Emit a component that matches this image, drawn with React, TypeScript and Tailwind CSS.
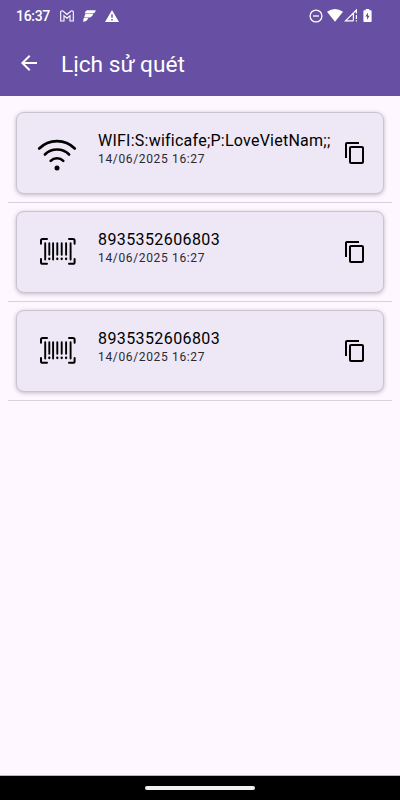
import React from "react";
import { MdArrowBack, MdContentCopy } from "react-icons/md";

type Scan = { kind: "wifi" | "barcode"; value: string; time: string };

const scans: Scan[] = [
  { kind: "wifi", value: "WIFI:S:wificafe;P:LoveVietNam;;", time: "14/06/2025 16:27" },
  { kind: "barcode", value: "8935352606803", time: "14/06/2025 16:27" },
  { kind: "barcode", value: "8935352606803", time: "14/06/2025 16:27" },
];

function WifiIcon() {
  return (
    <svg width="42" height="42" viewBox="0 0 42 42" fill="none" stroke="#000" strokeWidth="2.6" strokeLinecap="round">
      <path d="M3.2 16.5C13 6.6 29 6.6 38.8 16.5" />
      <path d="M8.9 22.5C15.5 15.9 26.5 15.9 33.1 22.5" />
      <path d="M14.7 28.8C18 25.4 24 25.4 27.3 28.8" />
      <circle cx="21" cy="36.1" r="2.5" fill="#000" stroke="none" />
    </svg>
  );
}

function BarcodeIcon() {
  return (
    <svg width="42" height="42" viewBox="0 0 42 42" fill="none" stroke="#000" strokeWidth="2" strokeLinecap="round" strokeLinejoin="round">
      <path d="M5 12.8V9.6Q5 8 6.6 8H11M33 8H37Q38.6 8 38.6 9.6V12.8M38.6 28V31.2Q38.6 32.8 37 32.8H33M11 32.8H6.6Q5 32.8 5 31.2V28" />
      <path strokeWidth="1.9" d="M9.2 12.2V28.6M17.1 12.2V28.6M34.6 12.2V28.6M13.3 12.2V23.8M21.3 12.2V23.8M25.7 12.2V23.8M30.1 12.2V23.8" />
      <path strokeWidth="2.3" d="M13.3 27.6v.5M21.3 27.6v.5M25.7 27.6v.5M30.1 27.6v.5" />
    </svg>
  );
}

function StatusBar() {
  return (
    <div className="flex h-[31px] items-center pl-4 pr-7">
      <span className="w-[44px] text-[14px] font-medium leading-4 tracking-[-0.3px]">16:37</span>
      <svg width="14" height="12" viewBox="0 0 14 12" fill="none" stroke="currentColor" strokeWidth="1.1">
        <path d="M.7 1.6Q1.6.3 2.9 1L7 4.5 11.1 1Q12.4.3 13.3 1.6V11H10V5.6L7 8.2 4 5.6V11H.7Z" />
      </svg>
      <svg className="ml-[9px]" width="13" height="12" viewBox="0 0 13 12" fill="currentColor">
        <path d="M4 .2H12.8Q12.2 3.3 9.4 3.6H1.7Q2.4.7 4 .2ZM2.6 4.1H10.2Q9.4 7.3 7 7.6H1.2Q1.5 5.1 2.6 4.1ZM.9 8.1H5.2Q4.2 11.6.2 11.8Q0 9.6.9 8.1Z" />
      </svg>
      <svg className="ml-[9px]" width="14" height="12" viewBox="0 0 14 12">
        <path fill="currentColor" d="M7 0 14 12H0Z" />
        <path stroke="#674fa3" strokeWidth="1.4" d="M7 4.3V7.8M7 9V10.4" />
      </svg>
      <svg className="ml-auto" width="14" height="14" viewBox="0 0 14 14" fill="none" stroke="currentColor" strokeWidth="1.3">
        <circle cx="7" cy="7" r="5.9" />
        <path d="M4 7h6" />
      </svg>
      <svg className="ml-1" width="16" height="13" viewBox="0 0 16 13" fill="currentColor">
        <path d="M0 2.8Q8-2.6 16 2.8L8 12.7Z" />
      </svg>
      <svg className="ml-px" width="14" height="13" viewBox="0 0 14 13" fill="none" stroke="currentColor" strokeWidth="1.2">
        <path d="M9.4 11.8H1.5L12.4 1V4.6M9.4 11.8V4.2M12.4 6V10M12.4 11.2V12.5" />
      </svg>
      <svg className="ml-[5px]" width="9" height="13" viewBox="0 0 9 13">
        <path fill="currentColor" d="M2.7 0H6.3V1.2H7.8Q8.6 1.2 8.6 2V12.2Q8.6 13 7.8 13H1.2Q.4 13 .4 12.2V2Q.4 1.2 1.2 1.2H2.7Z" />
        <path fill="#674fa3" d="M5 3.5 2.3 7.6H4V10.8L6.7 6.7H5Z" />
      </svg>
    </div>
  );
}

export default function App() {
  return (
    <div className="flex h-[800px] w-[400px] flex-col overflow-hidden bg-[#fef7ff] font-['Roboto',sans-serif] text-black">
      <header className="h-24 shrink-0 bg-[#674fa3] text-white">
        <StatusBar />
        <div className="flex h-16 items-center pl-[17px]">
          <MdArrowBack size={24} />
          <h1 className="ml-5 pt-[3px] text-[22.7px] leading-7">Lịch sử quét</h1>
        </div>
      </header>
      <main className="flex-1 p-2">
        {scans.map((scan, i) => (
          <div key={i} className="border-b border-[#d8d2da] p-2">
            <article className="flex h-[82px] items-center rounded-lg border border-[#cac4d0] bg-[#ede7f6] pl-[19px] pr-4 shadow-[0_1px_4px_rgba(0,0,0,0.25)]">
              {scan.kind === "wifi" ? <WifiIcon /> : <BarcodeIcon />}
              <div className="-mt-[9px] ml-5 flex-1 whitespace-nowrap">
                <p className={scan.kind === "wifi" ? "text-[16px] leading-5 tracking-[0.24px]" : "text-[16px] leading-5 tracking-[0.4px]"}>{scan.value}</p>
                <p className="text-[12px] leading-4 tracking-[0.65px] text-[#2b2930]">{scan.time}</p>
              </div>
              <MdContentCopy size={24} />
            </article>
          </div>
        ))}
      </main>
      <footer className="flex h-[25px] shrink-0 items-center justify-center border-t border-[#b9b5ba] bg-black">
        <div className="h-1 w-[110px] rounded-full bg-[#f0f0f0]" />
      </footer>
    </div>
  );
}
